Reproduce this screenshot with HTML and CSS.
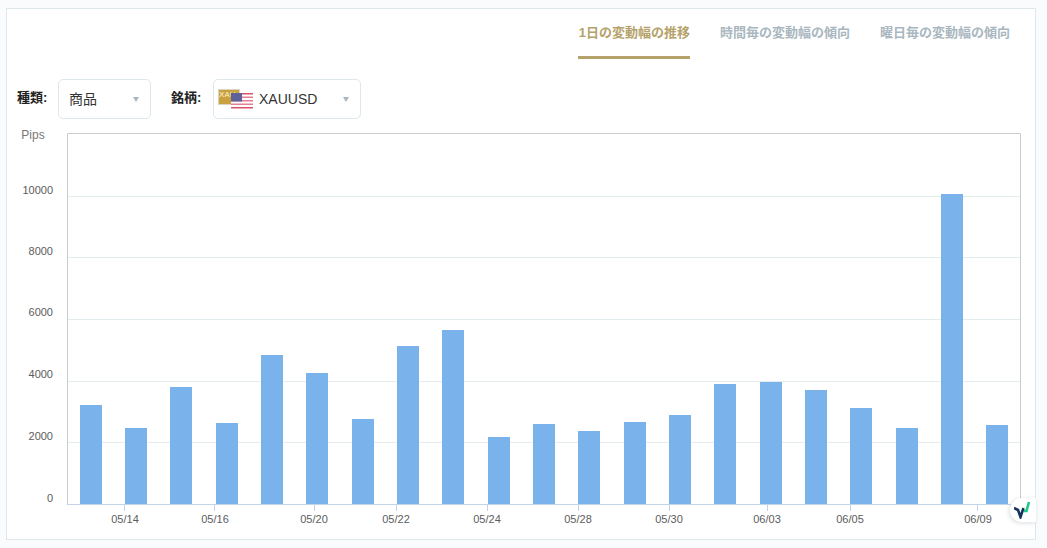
FILE: index.html
```html
<!DOCTYPE html>
<html lang="ja">
<head>
<meta charset="utf-8">
<title>変動幅の推移</title>
<link rel="stylesheet" href="styles.css">
</head>
<body>
<main class="card">
  <nav class="tabs">
    <a class="tab active">1日の変動幅の推移</a>
    <a class="tab">時間毎の変動幅の傾向</a>
    <a class="tab">曜日毎の変動幅の傾向</a>
  </nav>
  <div class="filters">
    <span class="label">種類:</span>
    <div class="select select-kind"><span class="value value-kind">商品</span><i class="caret"></i></div>
    <span class="label label-symbol">銘柄:</span>
    <div class="select select-symbol">
      <svg class="pair" width="36" height="20" viewBox="0 0 36 20">
        <rect x="0.5" y="0.5" width="21" height="15" fill="#c9a23f" stroke="#d9d4c4"/>
        <text x="1" y="8" class="xau">XAU</text>
        <g>
          <rect x="13" y="4" width="22" height="16" fill="#fff"/>
          <rect x="13" y="4" width="22" height="1.5" fill="#d9536b"/>
          <rect x="13" y="7.5" width="22" height="1.5" fill="#e4808f"/>
          <rect x="13" y="11" width="22" height="1.5" fill="#e4808f"/>
          <rect x="13" y="14.5" width="22" height="1.5" fill="#e4808f"/>
          <rect x="13" y="18" width="22" height="1.5" fill="#d9536b"/>
          <rect x="13" y="4" width="11" height="8.5" fill="#5f6299"/>
        </g>
      </svg>
      <span class="value">XAUUSD</span><i class="caret"></i>
    </div>
  </div>
  <svg class="chart" width="1027" height="417" viewBox="7 122 1027 417">
    <text x="33" y="139" class="unit">Pips</text>
    <g class="grid">
      <path d="M68 196.5H1020M68 257.5H1020M68 319.5H1020M68 381.5H1020M68 442.5H1020"/>
    </g>
    <g class="bars">
      <rect x="80" y="405" width="22" height="99"/>
      <rect x="125" y="428" width="22" height="76"/>
      <rect x="170" y="387" width="22" height="117"/>
      <rect x="216" y="423" width="22" height="81"/>
      <rect x="261" y="355" width="22" height="149"/>
      <rect x="306" y="373" width="22" height="131"/>
      <rect x="352" y="419" width="22" height="85"/>
      <rect x="397" y="346" width="22" height="158"/>
      <rect x="442" y="330" width="22" height="174"/>
      <rect x="488" y="437" width="22" height="67"/>
      <rect x="533" y="424" width="22" height="80"/>
      <rect x="578" y="431" width="22" height="73"/>
      <rect x="624" y="422" width="22" height="82"/>
      <rect x="669" y="415" width="22" height="89"/>
      <rect x="714" y="384" width="22" height="120"/>
      <rect x="760" y="382" width="22" height="122"/>
      <rect x="805" y="390" width="22" height="114"/>
      <rect x="850" y="408" width="22" height="96"/>
      <rect x="896" y="428" width="22" height="76"/>
      <rect x="941" y="194" width="22" height="310"/>
      <rect x="986" y="425" width="22" height="79"/>
    </g>
    <path class="frame" d="M67.5 504V133.5H1020.5V504"/>
    <path class="axis" d="M67 504.5H1021M124.5 505V511M214.5 505V511M314.5 505V511M396.5 505V511M487.5 505V511M578.5 505V511M669.5 505V511M767.5 505V511M850.5 505V511M977.5 505V511"/>
    <g class="ylabels">
      <text x="53" y="195">10000</text>
      <text x="53" y="256">8000</text>
      <text x="53" y="317">6000</text>
      <text x="53" y="379">4000</text>
      <text x="53" y="441">2000</text>
      <text x="53" y="503">0</text>
    </g>
    <g class="xlabels">
      <text x="125" y="523">05/14</text>
      <text x="215" y="523">05/16</text>
      <text x="314" y="523">05/20</text>
      <text x="396" y="523">05/22</text>
      <text x="487" y="523">05/24</text>
      <text x="578" y="523">05/28</text>
      <text x="669" y="523">05/30</text>
      <text x="767" y="523">06/03</text>
      <text x="850" y="523">06/05</text>
      <text x="978" y="523">06/09</text>
    </g>
  </svg>
</main>
<div class="badge">
  <svg width="18" height="18" viewBox="0 0 18 18">
    <path d="M0 7L4 9L6.5 16L9.5 7" fill="none" stroke="#16345a" stroke-width="2.6"/>
    <path d="M10 10L12.5 10L15 1" fill="none" stroke="#20c98b" stroke-width="2.6"/>
  </svg>
</div>
</body>
</html>
```

FILE: styles.css
```css
* { box-sizing: border-box; }
html, body { margin: 0; height: 100%; }
body {
  background: #f9fbfd;
  padding: 8px 11px 8px 6px;
  font-family: "Liberation Sans", "Noto Sans CJK JP", sans-serif;
  overflow: hidden;
  position: relative;
}
.card {
  height: 532px;
  background: #fff;
  border: 1px solid #dce8ec;
  display: flex;
  flex-direction: column;
}
.tabs {
  display: flex;
  flex: none;
  justify-content: flex-end;
  gap: 30px;
  padding: 0 25px 0 0;
  height: 51px;
}
.tab {
  font-size: 13px;
  font-weight: 700;
  color: #a9b7c0;
  line-height: 47px;
  height: 50px;
  white-space: nowrap;
}
.tab.active {
  color: #b5a26a;
  border-bottom: 3px solid #b5a26a;
  padding-left: 1px;
}
.filters {
  display: flex;
  flex: none;
  align-items: center;
  margin-top: 19px;
  padding-left: 10px;
  height: 40px;
}
.label {
  font-size: 13px;
  font-weight: 700;
  color: #222;
  width: 41px;
  margin-bottom: 5px;
}
.label-symbol { margin-left: 20px; width: 42px; }
.select {
  height: 40px;
  background: #fff;
  border: 1px solid #dce8ec;
  border-radius: 5px;
  display: flex;
  align-items: center;
  position: relative;
  padding-left: 11px;
}
.select-kind { width: 93px; padding-left: 10px; }
.select-symbol { width: 148px; padding-left: 4px; gap: 5px; }
.value { font-size: 14px; color: #333; }
.value-kind { margin-top: -3px; }
.caret {
  position: absolute;
  right: 11px;
  top: 17px;
  width: 0;
  height: 0;
  border-left: 3.5px solid transparent;
  border-right: 3.5px solid transparent;
  border-top: 5px solid #a9b7c0;
}
.pair { display: block; flex: none; margin-top: -1px; }
.xau { font: 700 8px "Liberation Sans", sans-serif; fill: #f0dfa8; }
.chart { display: block; margin-top: 3px; flex: none; }
.unit { font-size: 12px; fill: #777; text-anchor: middle; }
.grid path { stroke: #e3ecef; fill: none; }
.bars rect { fill: #7ab3ec; }
.frame { fill: none; stroke: #c8cdd0; }
.axis { fill: none; stroke: #c3d3ea; }
.ylabels text { font-size: 11px; fill: #5c5c5c; text-anchor: end; transform: translateY(-1px); }
.xlabels text { font-size: 11px; fill: #5c5c5c; text-anchor: middle; }
.badge {
  position: absolute;
  left: 1010px;
  top: 498px;
  width: 26px;
  height: 24px;
  background: #fff;
  border-radius: 12px 0 0 12px;
  box-shadow: -1px 1px 4px rgba(40, 60, 80, .18);
  display: flex;
  align-items: center;
  justify-content: center;
}
```
